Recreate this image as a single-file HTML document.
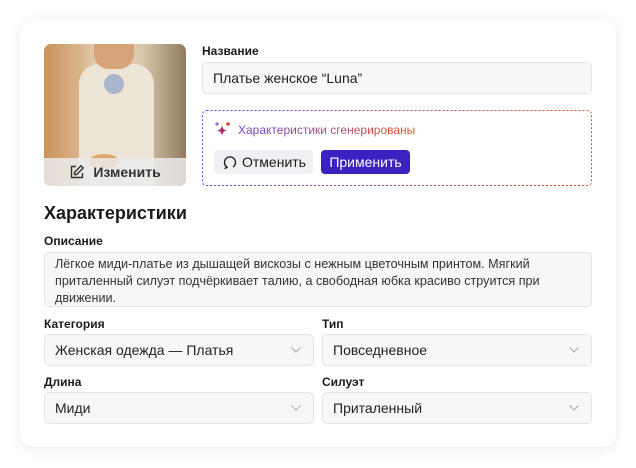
<!DOCTYPE html>
<html><head><meta charset="utf-8"><style>
*{box-sizing:border-box;margin:0;padding:0}
body{width:636px;height:468px;background:#fff;font-family:"Liberation Sans",sans-serif;color:#1a1a1a;position:relative;overflow:hidden}
.card{position:absolute;left:20px;top:20px;width:596px;height:427px;background:#fff;border-radius:14px;box-shadow:0 2px 14px rgba(0,0,0,.08)}
.a{position:absolute}
.lbl{font-size:12px;font-weight:bold;color:#1a1a1a}
.inp{background:#f6f7f9;border:1px solid #e2e4e8;border-radius:5px;font-size:14px;color:#222;padding:0 10px;display:flex;align-items:center}
.sel{justify-content:space-between}
.sel svg{margin-right:2px}
</style></head><body>
<div class="card"></div>
<div class="a" style="left:44px;top:44px;width:142px;height:142px;border-radius:7px;overflow:hidden;background:linear-gradient(90deg,#c9935a 0%,#d9b48a 25%,#e8dcc8 45%,#d8c6a8 70%,#8f7a60 100%)">
 <div class="a" style="left:35px;top:20px;width:75px;height:122px;background:#ece4d4;border-radius:20px 20px 0 0"></div>
 <div class="a" style="left:50px;top:0;width:40px;height:25px;background:#d8a27a;border-radius:0 0 15px 15px"></div>
 <div class="a" style="left:60px;top:30px;width:20px;height:20px;background:#8ea3c8;border-radius:50%;opacity:.7"></div>
 <div class="a" style="left:45px;top:110px;width:30px;height:15px;background:#d98a3a;border-radius:50%;opacity:.7"></div>
 <div class="a" style="left:0;top:114px;width:142px;height:28px;background:rgba(235,235,235,.85);display:flex;align-items:center;justify-content:center;font-size:14px;font-weight:bold;color:#333">
  <svg width="16" height="16" viewBox="0 0 16 16" style="margin-right:8px" fill="none" stroke="#333" stroke-width="1.4"><path d="M7 2.5H2.5v11h11V9"/><path d="M12 1.8l2.2 2.2-6.5 6.5H5.5V8.3z"/></svg>Изменить</div>
</div>
<div class="a lbl" style="left:202px;top:44px">Название</div>
<div class="a inp" style="left:202px;top:62px;width:390px;height:32px">Платье женское “Luna”</div>
<svg class="a" style="left:202px;top:110px" width="390" height="76"><defs><linearGradient id="g" x1="0" x2="1"><stop offset="0" stop-color="#6a44e0"/><stop offset="1" stop-color="#e8501e"/></linearGradient></defs><rect x=".5" y=".5" width="389" height="75" rx="4" fill="none" stroke="url(#g)" stroke-dasharray="2 2"/></svg>
<svg class="a" style="left:214px;top:120px" width="18" height="18" viewBox="0 0 18 18"><path d="M8 5Q8.6 10 13 10.5Q8.6 11 8 16Q7.4 11 3 10.5Q7.4 10 8 5z" fill="#b0306a"/><circle cx="14" cy="4" r="1.8" fill="#e0402a"/><path d="M3 2v4M1 4h4" stroke="#7a4ad0" stroke-width="1"/></svg>
<div class="a" style="left:238px;top:123px;font-size:12px;background:linear-gradient(90deg,#6a44e0,#e8501e);-webkit-background-clip:text;color:transparent">Характеристики сгенерированы</div>
<div class="a" style="left:214px;top:150px;width:99px;height:24px;background:#eef0f3;border-radius:4px;font-size:14px;display:flex;align-items:center;padding-left:8px"><svg width="16" height="16" viewBox="0 0 16 16" fill="none" stroke="#222" stroke-width="1.4" style="margin-right:4px"><path d="M5 13A5.5 5.5 0 1 1 11 13"/><path d="M3 11l2 2.5-2.5 1"/></svg>Отменить</div>
<div class="a" style="left:321px;top:150px;width:89px;height:24px;background:#3a22c0;border-radius:4px;font-size:14px;color:#fff;display:flex;align-items:center;justify-content:center">Применить</div>
<div class="a" style="left:44px;top:203px;font-size:18px;font-weight:bold">Характеристики</div>
<div class="a lbl" style="left:44px;top:234px">Описание</div>
<div class="a inp" style="left:44px;top:252px;width:548px;height:55px;font-size:12.6px;line-height:17px;align-items:flex-start;padding:3px 50px 0 10px;color:#333">Лёгкое миди-платье из дышащей вискозы с нежным цветочным принтом. Мягкий приталенный силуэт подчёркивает талию, а свободная юбка красиво струится при движении.</div>
<div class="a lbl" style="left:44px;top:317px">Категория</div>
<div class="a lbl" style="left:322px;top:317px">Тип</div>
<div class="a inp sel" style="left:44px;top:334px;width:270px;height:32px">Женская одежда — Платья<svg width="10" height="6"><path d="M.5.5l4.5 4.5 4.5-4.5" fill="none" stroke="#aaa"/></svg></div>
<div class="a inp sel" style="left:322px;top:334px;width:270px;height:32px">Повседневное<svg width="10" height="6"><path d="M.5.5l4.5 4.5 4.5-4.5" fill="none" stroke="#aaa"/></svg></div>
<div class="a lbl" style="left:44px;top:375px">Длина</div>
<div class="a lbl" style="left:322px;top:375px">Силуэт</div>
<div class="a inp sel" style="left:44px;top:392px;width:270px;height:32px">Миди<svg width="10" height="6"><path d="M.5.5l4.5 4.5 4.5-4.5" fill="none" stroke="#aaa"/></svg></div>
<div class="a inp sel" style="left:322px;top:392px;width:270px;height:32px">Приталенный<svg width="10" height="6"><path d="M.5.5l4.5 4.5 4.5-4.5" fill="none" stroke="#aaa"/></svg></div>
</body></html>
